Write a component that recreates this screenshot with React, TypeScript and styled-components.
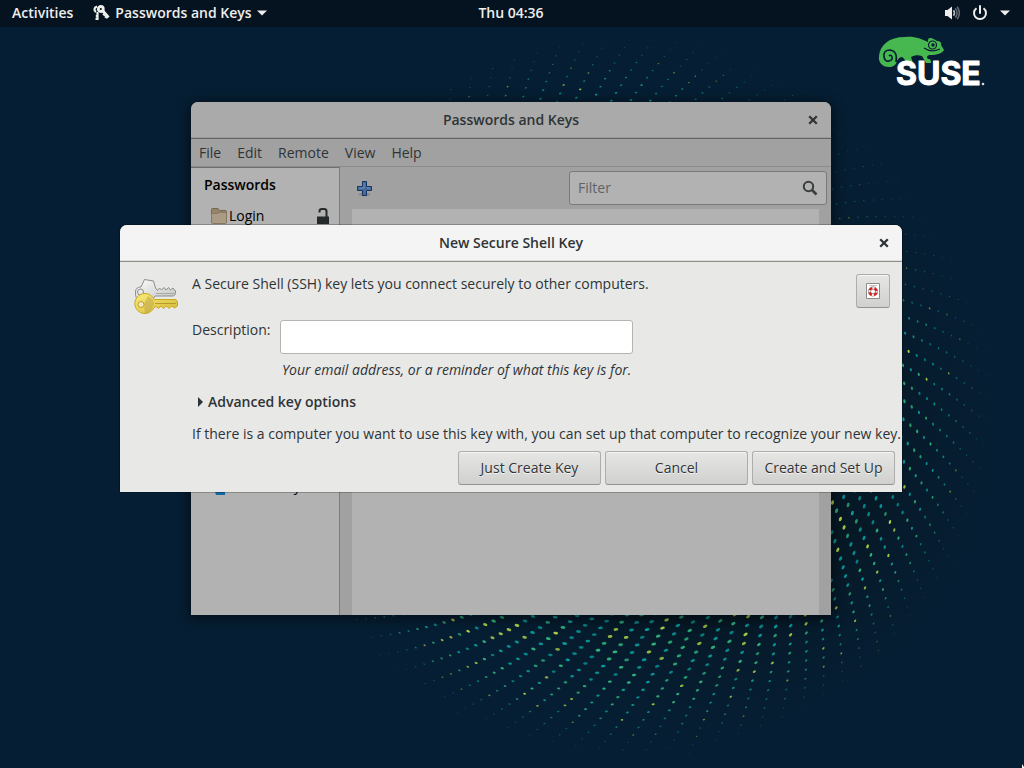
import React from "react";
import styled, { createGlobalStyle } from "styled-components";

const GlobalStyle = createGlobalStyle`
  * { box-sizing: border-box; }
  html, body, #root { height: 100%; }
  body {
    margin: 0;
    overflow: hidden;
    font: 14px/20px "Open Sans", "Noto Sans", sans-serif;
    color: #2e3436;
  }
  button, input { font: inherit; color: inherit; }
`;

const Desktop = styled.div`
  position: relative;
  min-height: 100%;
  background: #061e33;
  overflow: hidden;
`;

const Wallpaper = styled.svg`
  position: absolute;
  top: 0;
  left: 0;
  overflow: visible;
`;

const Logo = styled.svg`
  position: absolute;
  top: 34px;
  right: 36px;
  overflow: visible;
`;

const Pointer = styled.svg`
  position: absolute;
  right: 0;
  bottom: 0;
`;

const TopBar = styled.header`
  position: relative;
  display: grid;
  grid-template-columns: 1fr auto 1fr;
  align-items: center;
  height: 27px;
  padding: 0 14px 2px 12px;
  background: #04131f;
  color: #eeeeec;
  font-weight: 600;
`;

const BarGroup = styled.div<{ $end?: boolean }>`
  display: flex;
  align-items: center;
  gap: ${(p) => (p.$end ? "12px" : "20px")};
  justify-content: ${(p) => (p.$end ? "flex-end" : "flex-start")};
`;

const BarButton = styled.button`
  display: flex;
  align-items: center;
  gap: 5px;
  height: 24px;
  padding: 0;
  border: 0;
  background: none;
`;

const Window = styled.section<{ $dialog?: boolean }>`
  position: absolute;
  left: ${(p) => (p.$dialog ? "120px" : "191px")};
  top: ${(p) => (p.$dialog ? "225px" : "102px")};
  width: ${(p) => (p.$dialog ? "782px" : "640px")};
  min-height: ${(p) => (p.$dialog ? "267px" : "513px")};
  display: flex;
  flex-direction: column;
  border-radius: 7px 7px 0 0;
  overflow: hidden;
  background: ${(p) => (p.$dialog ? "#e8e8e7" : "#a1a1a1")};
  box-shadow: ${(p) => (p.$dialog ? "0 0 0 1px rgba(0, 0, 0, 0.23)" : "0 2px 12px 2px rgba(0, 0, 0, 0.5)")};
`;

const TitleBar = styled.div<{ $dialog?: boolean }>`
  display: grid;
  grid-template-columns: 1fr auto 1fr;
  align-items: center;
  height: 37px;
  padding: 0 12px;
  background: ${(p) => (p.$dialog ? "#f4f4f4" : "#aaaaaa")};
  border-bottom: 1px solid ${(p) => (p.$dialog ? "#8f908c" : "#636461")};
  box-shadow: inset 0 -1px ${(p) => (p.$dialog ? "#dddddc" : "#9b9b9b")};
`;

const Title = styled.h1`
  grid-column: 2;
  margin: 0;
  font-size: 14px;
  line-height: 20px;
  font-weight: 600;
`;

const CloseButton = styled.button`
  justify-self: end;
  display: flex;
  padding: 0;
  border: 0;
  background: none;
`;

const MenuBar = styled.nav`
  display: flex;
  gap: 16px;
  height: 28px;
  padding: 0 8px;
  border-bottom: 1px solid #8c8c8c;
`;

const MenuButton = styled.button`
  padding: 0;
  border: 0;
  background: none;
`;

const Panes = styled.div`
  flex: 1;
  display: flex;
`;

const Sidebar = styled.aside`
  width: 149px;
  padding: 7px 0;
  background: #b2b2b2;
  border-right: 1px solid #7d7d7d;
  border-top: 1px solid #6f6f6f;
  color: #000;
`;

const SideHeading = styled.h2`
  margin: 0 0 11px 13px;
  font-size: 14px;
  line-height: 20px;
  font-weight: 600;
`;

const SideRow = styled.div<{ $later?: boolean }>`
  display: flex;
  align-items: center;
  gap: 2px;
  height: 20px;
  margin-top: ${(p) => (p.$later ? "250px" : "0")};
  padding: 0 9px 0 20px;
`;

const SideLabel = styled.span`
  flex: 1;
`;

const Content = styled.div`
  flex: 1;
  display: flex;
  flex-direction: column;
`;

const ToolBar = styled.div`
  display: flex;
  align-items: center;
  justify-content: space-between;
  height: 42px;
  padding: 0 4px 0 16px;
`;

const ToolButton = styled.button`
  display: flex;
  padding: 0;
  border: 0;
  background: none;
`;

const SearchBox = styled.label`
  display: flex;
  align-items: center;
  width: 258px;
  height: 34px;
  padding: 0 8px;
  border: 1px solid #7a7a7a;
  border-radius: 3px;
  background: #b2b2b2;
`;

const SearchInput = styled.input`
  flex: 1;
  min-width: 0;
  padding: 0;
  border: 0;
  outline: 0;
  background: none;
  &::placeholder { color: #606364; opacity: 1; }
`;

const KeyList = styled.div`
  flex: 1;
  margin: 0 12px;
  background: #b2b2b2;
`;

const DialogBody = styled.form`
  flex: 1;
  display: flex;
  flex-direction: column;
  justify-content: space-between;
  padding: 12px 7px 7px 14px;
`;

const DialogMain = styled.div`
  display: flex;
  align-items: flex-start;
`;

const KeyArt = styled.svg`
  flex: none;
  margin: 4px 12px 0 0;
`;

const Fields = styled.div`
  flex: 1;
  min-width: 0;
`;

const Text = styled.p`
  margin: 0;
  white-space: nowrap;
`;

const FieldGrid = styled.div`
  display: grid;
  grid-template-columns: 76px 353px;
  column-gap: 12px;
  row-gap: 6px;
  margin-top: 26px;
`;

const TextInput = styled.input`
  height: 34px;
  padding: 0 8px;
  border: 1px solid #b4b4b2;
  border-radius: 3px;
  background: #fff;
  outline: 0;
`;

const Hint = styled.em`
  grid-column: 2;
  padding-left: 2px;
  white-space: nowrap;
`;

const Expander = styled.button`
  display: flex;
  align-items: center;
  gap: 5px;
  margin: 12px 0;
  padding: 0 0 0 6px;
  border: 0;
  background: none;
  font-weight: 600;
`;

const PushButton = styled.button<{ $square?: boolean }>`
  display: flex;
  align-items: center;
  justify-content: center;
  flex: none;
  width: ${(p) => (p.$square ? "34px" : "143px")};
  height: 34px;
  margin-right: ${(p) => (p.$square ? "5px" : "0")};
  padding: 0;
  border: 1px solid #adadab;
  border-bottom-color: #92928f;
  border-radius: 3px;
  background: linear-gradient(#e6e6e5, #d0d0cf);
  box-shadow: inset 0 1px #f4f4f3;
  text-shadow: 0 1px rgba(255, 255, 255, 0.75);
`;

const Actions = styled.div`
  display: flex;
  justify-content: flex-end;
  gap: 4px;
`;

/* Halftone swirl: dots on spiral arms that shrink and fade toward the rim. */
const CENTER = { x: 632, y: 395 };
const RIM = 370;
const ARMS = 95;

type Dot = { x: number; y: number; rx: number; ry: number; tilt: number; fill: string; alpha: number };

function swirlDots(): Dot[] {
  let seed = 11;
  const random = () => {
    seed = (seed * 16807) % 2147483647;
    return seed / 2147483647;
  };
  const dots: Dot[] = [];
  for (let r = 190; r < RIM; r += 7.5) {
    const twist = 0.7 * Math.log(r);
    for (let arm = 0; arm < ARMS; arm++) {
      const shade = random();
      const jitter = random();
      const angle = (arm * 2 * Math.PI) / ARMS + twist;
      const x = CENTER.x + r * Math.cos(angle);
      const y = CENTER.y + r * Math.sin(angle);
      /* The upper right of the ring is nearly empty. */
      const thin = Math.max(0, Math.cos(angle + 0.75)) ** 4;
      const strength = Math.min(1, (RIM - r) / 105) * (1 - 0.65 * thin);
      const weight = strength * (y > 300 ? 1 : 0.75);
      dots.push({
        x,
        y,
        rx: 0.5 + 1.9 * weight,
        ry: 0.45 + 0.95 * weight,
        tilt: (angle * 180) / Math.PI + 80,
        fill: shade < 0.52 ? "#089c9c" : shade < 0.85 ? "#2eb27c" : "#b4d548",
        alpha: Math.min(1, strength * 1.8) * (0.75 + 0.25 * jitter),
      });
    }
  }
  return dots;
}

const DOTS = swirlDots();

const Close = () => (
  <svg width="12" height="12" viewBox="0 0 12 12" aria-hidden="true">
    <path d="M2.2 2.2 9.8 9.8M9.8 2.2 2.2 9.8" stroke="#2e3436" strokeWidth="2.3" />
  </svg>
);

const Caret = () => (
  <svg width="10" height="6" viewBox="0 0 10 6" aria-hidden="true">
    <path d="M0 .5h10L5 5.5z" fill="#eeeeec" />
  </svg>
);

const BarKeys = () => (
  <svg width="17" height="16" viewBox="0 0 17 16" fill="none" stroke="#eeeeec" aria-hidden="true">
    <circle cx="7.8" cy="4" r="2.5" strokeWidth="2.8" />
    <path d="M9.500 5.500 15.500 12.500M11.500 9l-1 1.500M13.500 11.500l-1 1.500" strokeWidth="2.800" />
    <path d="M4 1.500C.8 2.500 .8 5.500 3 7M4.500 7v8M4.500 13.800H2.500M4.500 11H2.800" strokeWidth="2.200" />
  </svg>
);

const Volume = () => (
  <svg width="16" height="16" viewBox="0 0 16 16" fill="none" aria-hidden="true">
    <path d="M1 5h2.500L8 1.500v13L3.500 11H1z" fill="#eeeeec" />
    <path d="M9.500 5.300q2 2.700 0 5.400" stroke="#c0c3c5" strokeWidth="1.500" />
    <path d="M11.300 3.300q3.500 4.700 0 9.400M13.200 1.800q4.300 6.200 0 12.400" stroke="#626b73" strokeWidth="1.500" />
  </svg>
);

const Power = () => (
  <svg width="16" height="16" viewBox="0 0 16 16" fill="none" stroke="#eeeeec" strokeWidth="2" aria-hidden="true">
    <path d="M4.500 3.200a6 6 0 1 0 7 0" />
    <path d="M8 1v7" strokeLinecap="round" />
  </svg>
);

const Plus = () => (
  <svg width="17" height="17" viewBox="0 0 17 17" aria-hidden="true">
    <ellipse cx="8.500" cy="14.500" rx="6" ry="1.800" fill="#000" opacity=".15" />
    <path d="M6.500 1.500h4v5h5v4h-5v5h-4v-5h-5v-4h5z" fill="#476a9c" stroke="#17335f" strokeLinejoin="round" />
    <path d="M8 3v5H3M11 8h3" stroke="#6f8fb9" fill="none" />
  </svg>
);

const Magnifier = () => (
  <svg width="16" height="16" viewBox="0 0 16 16" fill="none" stroke="#3a3e3d" aria-hidden="true">
    <circle cx="6.500" cy="6.500" r="4.700" strokeWidth="2" />
    <path d="m10 10 4.500 4.500" strokeWidth="2.600" />
  </svg>
);

const Folder = () => (
  <svg width="16" height="16" viewBox="0 0 16 16" aria-hidden="true">
    <path d="M.5 14V1.500q0-1 1-1H7l1.500 2h6q1 0 1 1V14z" fill="#958467" stroke="#756850" />
    <path d="M.5 6q0-.5.8-.5h5L8 4.500h7.500V14q0 1.500-1 1.500h-13q-1 0-1-1.500z" fill="#ab9b85" stroke="#857860" />
  </svg>
);

const Unlocked = () => (
  <svg width="14" height="17" viewBox="0 0 14 17" aria-hidden="true">
    <path d="M3.500 4.500V3.200Q3.500 1 6 1h2q2.500 0 2.500 2.300V9" fill="none" stroke="#24292a" strokeWidth="2" />
    <path d="M1 8.500h12V16H1z" fill="#24292a" />
  </svg>
);

const KeyRing = () => (
  <svg width="16" height="20" viewBox="0 0 16 20" aria-hidden="true">
    <path d="M2 9Q7 5 14 8v11H5Z" fill="#1468a0" />
  </svg>
);

const HelpPage = () => (
  <svg width="14" height="16" viewBox="0 0 14 16" aria-hidden="true">
    <path d="M.5.5h13v15H.5z" fill="#fff" stroke="#8a8c88" />
    <path d="M3 2.500h8" stroke="#c8c8c6" />
    <circle cx="7" cy="8.500" r="3.500" fill="none" stroke="#777" strokeWidth="3" />
    <circle cx="7" cy="8.500" r="3.500" fill="none" stroke="#f4eeee" strokeWidth="2" />
    <circle
      cx="7"
      cy="8.500"
      r="3.500"
      fill="none"
      stroke="#d81e1e"
      strokeWidth="2.400"
      strokeDasharray="3.300 2.200"
      strokeDashoffset="-1.100"
    />
  </svg>
);

export default function App() {
  return (
    <Desktop>
      <GlobalStyle />
      <Wallpaper width="1024" height="768" viewBox="0 0 1024 768" aria-hidden="true">
        <defs>
          <radialGradient id="glow">
            <stop offset="0" stopColor="#06131c" />
            <stop offset=".6" stopColor="#061825" stopOpacity=".9" />
            <stop offset="1" stopColor="#061e33" stopOpacity="0" />
          </radialGradient>
        </defs>
        <circle cx="700" cy="440" r="310" fill="url(#glow)" />
        {DOTS.map((d, i) => (
          <ellipse
            key={i}
            rx={d.rx}
            ry={d.ry}
            fill={d.fill}
            opacity={d.alpha}
            transform={`translate(${d.x} ${d.y}) rotate(${d.tilt})`}
          />
        ))}
      </Wallpaper>

      <TopBar>
        <BarGroup>
          <BarButton>Activities</BarButton>
          <BarButton>
            <BarKeys />
            Passwords and Keys
            <Caret />
          </BarButton>
        </BarGroup>
        <BarButton>Thu 04:36</BarButton>
        <BarGroup $end>
          <Volume />
          <Power />
          <Caret />
        </BarGroup>
      </TopBar>

      <Logo width="112" height="54" viewBox="0 0 112 54" role="img" aria-label="SUSE">
        <path
          d="M3 22C4 11 13 3 29 3c10-1 16 2 23 5 0-2 0-4 2-4 3 0 5 2 7 3 3 0 5 2 4 4l3 5c-1 3-8 5-13 5-4 0-5 2-3 4 3 0 3 2 3 4h-5l-4-7c-4-1-7-1-11 1l2 6h-7c-1-3-2-5-4-6-2 0-4 2-5 4-1 4-4 6-8 6C6 33 2 28 3 22Z"
          fill="#47b84f"
        />
        <path
          d="M20 28q2-11-6-12-7 0-6 7 1 5 5 4 4-1 3-4-1-3-3-1"
          fill="none"
          stroke="#061e33"
          strokeWidth="1.600"
        />
        <circle cx="56.500" cy="11" r="4" fill="none" stroke="#061e33" strokeWidth="1.200" />
        <circle cx="57" cy="11" r="1.700" fill="#061e33" />
        <path d="M48 14q7 5 16 1" fill="none" stroke="#061e33" strokeWidth="1.200" />
        <text x="20" y="51" fontFamily="Inter, sans-serif" fontSize="32" fontWeight="700" fill="#fff" stroke="#fff" strokeLinejoin="round">
          SUSE
        </text>
        <circle cx="107" cy="50" r="1.300" fill="#d5dbe0" />
      </Logo>

      <Window aria-label="Passwords and Keys">
        <TitleBar>
          <Title>Passwords and Keys</Title>
          <CloseButton aria-label="Close">
            <Close />
          </CloseButton>
        </TitleBar>
        <MenuBar>
          {["File", "Edit", "Remote", "View", "Help"].map((name) => (
            <MenuButton key={name}>{name}</MenuButton>
          ))}
        </MenuBar>
        <Panes>
          <Sidebar>
            <SideHeading>Passwords</SideHeading>
            <SideRow>
              <Folder />
              <SideLabel>Login</SideLabel>
              <Unlocked />
            </SideRow>
            <SideRow $later>
              <KeyRing />
              <SideLabel>GnuPG keys</SideLabel>
            </SideRow>
          </Sidebar>
          <Content>
            <ToolBar>
              <ToolButton aria-label="Add">
                <Plus />
              </ToolButton>
              <SearchBox>
                <SearchInput placeholder="Filter" aria-label="Filter" />
                <Magnifier />
              </SearchBox>
            </ToolBar>
            <KeyList />
          </Content>
        </Panes>
      </Window>

      <Window $dialog role="dialog" aria-label="New Secure Shell Key">
        <TitleBar $dialog>
          <Title>New Secure Shell Key</Title>
          <CloseButton aria-label="Close">
            <Close />
          </CloseButton>
        </TitleBar>
        <DialogBody onSubmit={(e) => e.preventDefault()}>
          <DialogMain>
            <KeyArt width="46" height="40" viewBox="0 0 46 40" aria-hidden="true">
              <defs>
                <linearGradient id="silver" x1="0" y1="0" x2="1" y2="1">
                  <stop offset="0" stopColor="#fcfcfc" />
                  <stop offset="1" stopColor="#bfc1bd" />
                </linearGradient>
                <linearGradient id="gold" x1="0" y1="0" x2="1" y2="1">
                  <stop offset="0" stopColor="#faec80" />
                  <stop offset="1" stopColor="#d3b62f" />
                </linearGradient>
              </defs>
              <path
                d="M1.500 14q0-5 5.500-5L10.500 1.500l9 1.500 2 7 2 2.500 2-2.500 2 2 2.500-2.500 2 2.500 2.500-2.500 2 2.500 2.500-2 2.500 3v3l-2 2H21L17 24H6Q1 21 1.500 14Z"
                fill="url(#silver)"
                stroke="#8d8f8c"
              />
              <path d="M22 15.500h20" stroke="#a8aaa6" />
              <circle cx="6.500" cy="14" r="3" fill="#e8e8e7" stroke="#8d8f8c" />
              <path
                d="M20 21.500h22l1.500 2.500v4l-3 2-3-2-2.500 2.500-2.500-2.500-3 2.500-2.500-2.500-2.500 2.500-2.500-2-2 1A10 10 0 1 1 20 21.500Z"
                fill="url(#gold)"
                stroke="#c9a91c"
              />
              <path d="M14 18q6 3 6 8l-3 7-6 3-1-10Z" fill="#b9a24a" opacity=".5" />
              <path d="M21 25.500h21" stroke="#b79a2b" />
              <circle cx="7" cy="26.500" r="3" fill="#efe9c8" stroke="#c2a11c" />
            </KeyArt>
            <Fields>
              <Text>A Secure Shell (SSH) key lets you connect securely to other computers.</Text>
              <FieldGrid>
                <label htmlFor="description">Description:</label>
                <TextInput id="description" />
                <Hint>Your email address, or a reminder of what this key is for.</Hint>
              </FieldGrid>
              <Expander type="button" aria-expanded="false">
                <svg width="5" height="10" viewBox="0 0 5 10" aria-hidden="true">
                  <path d="M0 0 5 5 0 10z" fill="#2e3436" />
                </svg>
                Advanced key options
              </Expander>
              <Text>
                If there is a computer you want to use this key with, you can set up that computer to recognize your
                new key.
              </Text>
            </Fields>
            <PushButton $square type="button" aria-label="Help">
              <HelpPage />
            </PushButton>
          </DialogMain>
          <Actions>
            <PushButton type="button">Just Create Key</PushButton>
            <PushButton type="button">Cancel</PushButton>
            <PushButton type="submit">Create and Set Up</PushButton>
          </Actions>
        </DialogBody>
      </Window>

      <Pointer width="3" height="4" viewBox="0 0 3 4" aria-hidden="true">
        <path d="M1 0l2 3v1H1z" fill="#fff" />
      </Pointer>
    </Desktop>
  );
}
